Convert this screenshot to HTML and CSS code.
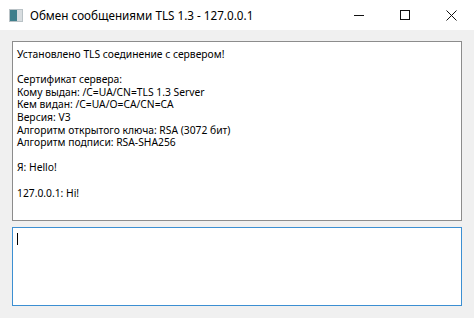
FILE: index.html
```html
<!DOCTYPE html>
<html lang="ru">
<head>
  <meta charset="UTF-8">
  <title>Обмен сообщениями TLS 1.3 - 127.0.0.1</title>
  <link rel="stylesheet" href="styles.css">
</head>
<body>
  <div class="window">
    <div class="titlebar">
      <svg class="app-icon" width="14" height="13" viewBox="0 0 14 13">
        <rect x="0" y="0" width="14" height="13" fill="#b9c2c6"/>
        <rect x="1" y="1" width="7" height="11" fill="#3f7f8c"/>
        <rect x="8" y="1" width="5" height="11" fill="#d8dde0"/>
      </svg>
      <span class="title">Обмен сообщениями TLS 1.3 - 127.0.0.1</span>
      <div class="controls">
        <span class="ctl">
          <svg width="10" height="10" viewBox="0 0 10 10"><path d="M0 5.5H10" stroke="#111" stroke-width="1"/></svg>
        </span>
        <span class="ctl">
          <svg width="10" height="10" viewBox="0 0 10 10"><rect x="0.5" y="0.5" width="9" height="9" fill="none" stroke="#111" stroke-width="1"/></svg>
        </span>
        <span class="ctl">
          <svg width="11" height="11" viewBox="0 0 11 11"><path d="M0.5 0.5L10.5 10.5M10.5 0.5L0.5 10.5" stroke="#111" stroke-width="1"/></svg>
        </span>
      </div>
    </div>

    <div class="content">
      <div class="log">
        <p>Установлено TLS соединение с сервером!</p>
        <p class="gap">Сертификат сервера:</p>
        <p>Кому выдан: /C=UA/CN=TLS 1.3 Server</p>
        <p>Кем видан: /C=UA/O=CA/CN=CA</p>
        <p>Версия: V3</p>
        <p>Алгоритм открытого ключа: RSA (3072 бит)</p>
        <p>Алгоритм подписи: RSA-SHA256</p>
        <p class="gap">Я: Hello!</p>
        <p class="gap">127.0.0.1: Hi!</p>
      </div>
      <div class="input">
        <span class="caret"></span>
      </div>
    </div>
  </div>
</body>
</html>
```

FILE: styles.css
```css
/* Windows-like chat window */
body, html {
  margin: 0;
  padding: 0;
}

body {
  width: 474px;
  height: 318px;
  overflow: hidden;
  font-family: "Noto Sans", "Open Sans", sans-serif;
}

.window {
  height: 318px;
  display: flex;
  flex-direction: column;
  background-color: #f0f0f0;
}

.titlebar {
  height: 30px;
  flex: none;
  background-color: #fff;
  display: flex;
  align-items: center;
}

.app-icon {
  margin-left: 9px;
  margin-right: 7px;
}

.title {
  font-size: 11.7px;
  color: #000;
  flex: 1;
}

.controls {
  display: flex;
  height: 30px;
}

.ctl {
  width: 46px;
  display: flex;
  align-items: center;
  justify-content: center;
}

.content {
  flex: 1;
  display: flex;
  flex-direction: column;
  gap: 6px;
  padding: 11px 12px 12px 12px;
}

.log {
  height: 180px;
  box-sizing: border-box;
  border: 1px solid #8c8c8c;
  background-color: #fff;
  padding: 6px 4px;
  font-size: 10.3px;
  line-height: 12.6px;
  color: #000;
}

.log p {
  margin: 0;
}

.log .gap {
  margin-top: 12.6px;
}

.input {
  flex: 1;
  border: 1px solid #3c8fd2;
  background-color: #fff;
  padding: 5px 4px;
}

.caret {
  display: block;
  width: 1px;
  height: 12px;
  background-color: #000;
}
```
